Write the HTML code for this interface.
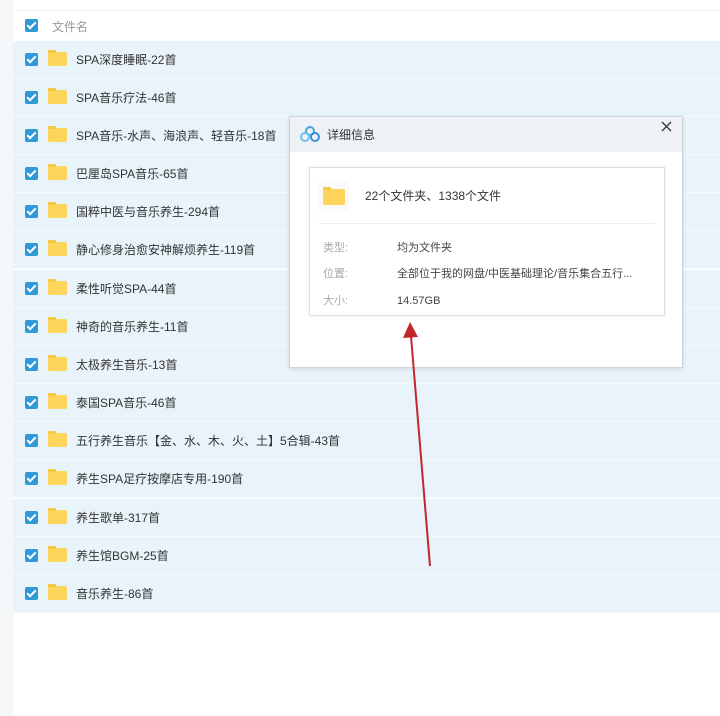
<!DOCTYPE html>
<html><head><meta charset="utf-8"><style>
body{margin:0;width:720px;height:716px;background:#fff;position:relative;overflow:hidden;font-family:"Liberation Sans","Noto Sans CJK SC",sans-serif;}
.strip{position:absolute;left:0;top:0;width:13px;height:716px;background:#f6f7f9}
.topl{position:absolute;left:13px;top:10px;width:707px;height:1px;background:#eef0f3}
.hdr{position:absolute;left:13px;top:11px;width:707px;height:30px;color:#999;font-size:12px}
.row{position:absolute;left:13px;width:707px;height:37px;background:#e8f3fa;border-bottom:1px solid #f4f9fd;font-size:12px;color:#333}
.cb{position:absolute;left:12px;width:13px;height:13px;border-radius:2px;background:#2f9ad6}
.cb:after{content:"";position:absolute;left:4px;top:1px;width:3px;height:7px;border:solid #fff;border-width:0 2px 2px 0;transform:rotate(45deg)}
.fd{position:absolute;left:35px;width:19px;height:14px;background:#fcd55a;border-radius:2px}
.fd:before{content:"";position:absolute;left:0;top:-2px;width:8px;height:3px;background:#f6c944;border-radius:1px 1px 0 0}
.tx{position:absolute;left:63px}
.dlg{position:absolute;left:289px;top:116px;width:392px;height:250px;background:#fff;border:1px solid #cfd4da;box-shadow:0 1px 4px rgba(0,0,0,.12)}
.tb{height:35px;background:#eef1f5;font-size:12px;color:#333;position:relative}
.box{position:absolute;left:19px;top:50px;width:354px;height:147px;border:1px solid #dcdfe3;box-shadow:0 0 3px rgba(0,0,0,.08)}
.lab{position:absolute;left:13px;color:#aaa;font-size:11px;line-height:14px}
.val{position:absolute;left:87px;color:#444;font-size:11px;line-height:14px}
</style></head><body>
<div class="strip"></div><div class="topl"></div>
<div class="hdr"><div class="cb" style="top:8px"></div><span style="position:absolute;left:39px;top:7px">文件名</span></div>
<div class="row" style="top:41px"><div class="cb" style="top:12px"></div><div class="fd" style="top:11px"></div><span class="tx" style="top:10px">SPA深度睡眠-22首</span></div>
<div class="row" style="top:79px"><div class="cb" style="top:12px"></div><div class="fd" style="top:11px"></div><span class="tx" style="top:10px">SPA音乐疗法-46首</span></div>
<div class="row" style="top:117px"><div class="cb" style="top:12px"></div><div class="fd" style="top:11px"></div><span class="tx" style="top:10px">SPA音乐-水声、海浪声、轻音乐-18首</span></div>
<div class="row" style="top:155px"><div class="cb" style="top:12px"></div><div class="fd" style="top:11px"></div><span class="tx" style="top:10px">巴厘岛SPA音乐-65首</span></div>
<div class="row" style="top:193px"><div class="cb" style="top:12px"></div><div class="fd" style="top:11px"></div><span class="tx" style="top:10px">国粹中医与音乐养生-294首</span></div>
<div class="row" style="top:231px"><div class="cb" style="top:12px"></div><div class="fd" style="top:11px"></div><span class="tx" style="top:10px">静心修身治愈安神解烦养生-119首</span></div>
<div class="row" style="top:270px"><div class="cb" style="top:12px"></div><div class="fd" style="top:11px"></div><span class="tx" style="top:10px">柔性听觉SPA-44首</span></div>
<div class="row" style="top:308px"><div class="cb" style="top:12px"></div><div class="fd" style="top:11px"></div><span class="tx" style="top:10px">神奇的音乐养生-11首</span></div>
<div class="row" style="top:346px"><div class="cb" style="top:12px"></div><div class="fd" style="top:11px"></div><span class="tx" style="top:10px">太极养生音乐-13首</span></div>
<div class="row" style="top:384px"><div class="cb" style="top:12px"></div><div class="fd" style="top:11px"></div><span class="tx" style="top:10px">泰国SPA音乐-46首</span></div>
<div class="row" style="top:422px"><div class="cb" style="top:12px"></div><div class="fd" style="top:11px"></div><span class="tx" style="top:10px">五行养生音乐【金、水、木、火、土】5合辑-43首</span></div>
<div class="row" style="top:460px"><div class="cb" style="top:12px"></div><div class="fd" style="top:11px"></div><span class="tx" style="top:10px">养生SPA足疗按摩店专用-190首</span></div>
<div class="row" style="top:499px"><div class="cb" style="top:12px"></div><div class="fd" style="top:11px"></div><span class="tx" style="top:10px">养生歌单-317首</span></div>
<div class="row" style="top:537px"><div class="cb" style="top:12px"></div><div class="fd" style="top:11px"></div><span class="tx" style="top:10px">养生馆BGM-25首</span></div>
<div class="row" style="top:575px"><div class="cb" style="top:12px"></div><div class="fd" style="top:11px"></div><span class="tx" style="top:10px">音乐养生-86首</span></div>

<div class="dlg">
<div class="tb">
<svg style="position:absolute;left:10px;top:9px" width="20" height="16" viewBox="0 0 20 16"><circle cx="10" cy="5" r="4" fill="none" stroke="#4aa3e0" stroke-width="2"/><circle cx="5" cy="11" r="4" fill="none" stroke="#6fc3ec" stroke-width="2"/><circle cx="15" cy="11" r="4" fill="none" stroke="#3b8fd6" stroke-width="2"/></svg>
<span style="position:absolute;left:37px;top:9px">详细信息</span>
<svg style="position:absolute;right:10px;top:4px" width="11" height="11" viewBox="0 0 11 11"><path d="M1 1L10 10M10 1L1 10" stroke="#333" stroke-width="1.3"/></svg>
</div>
<div class="box">
<div style="position:absolute;left:9px;top:13px;width:30px;height:30px;background:#fafafa"></div>
<div class="fd" style="left:13px;top:21px;width:22px;height:16px"></div>
<span style="position:absolute;left:55px;top:19px;font-size:12px;color:#333">22个文件夹、1338个文件</span>
<div style="position:absolute;left:9px;right:9px;top:55px;height:1px;background:#ebedf0"></div>
<span class="lab" style="top:73px">类型:</span><span class="val" style="top:73px">均为文件夹</span>
<span class="lab" style="top:99px">位置:</span><span class="val" style="top:99px">全部位于我的网盘/中医基础理论/音乐集合五行...</span>
<span class="lab" style="top:126px">大小:</span><span class="val" style="top:126px">14.57GB</span>
</div>
</div>
<svg style="position:absolute;left:0;top:0" width="720" height="716"><line x1="430" y1="566" x2="411" y2="336" stroke="#c0282a" stroke-width="2"/><polygon points="410,322 403,338 418,337" fill="#c0282a"/></svg>
</body></html>
